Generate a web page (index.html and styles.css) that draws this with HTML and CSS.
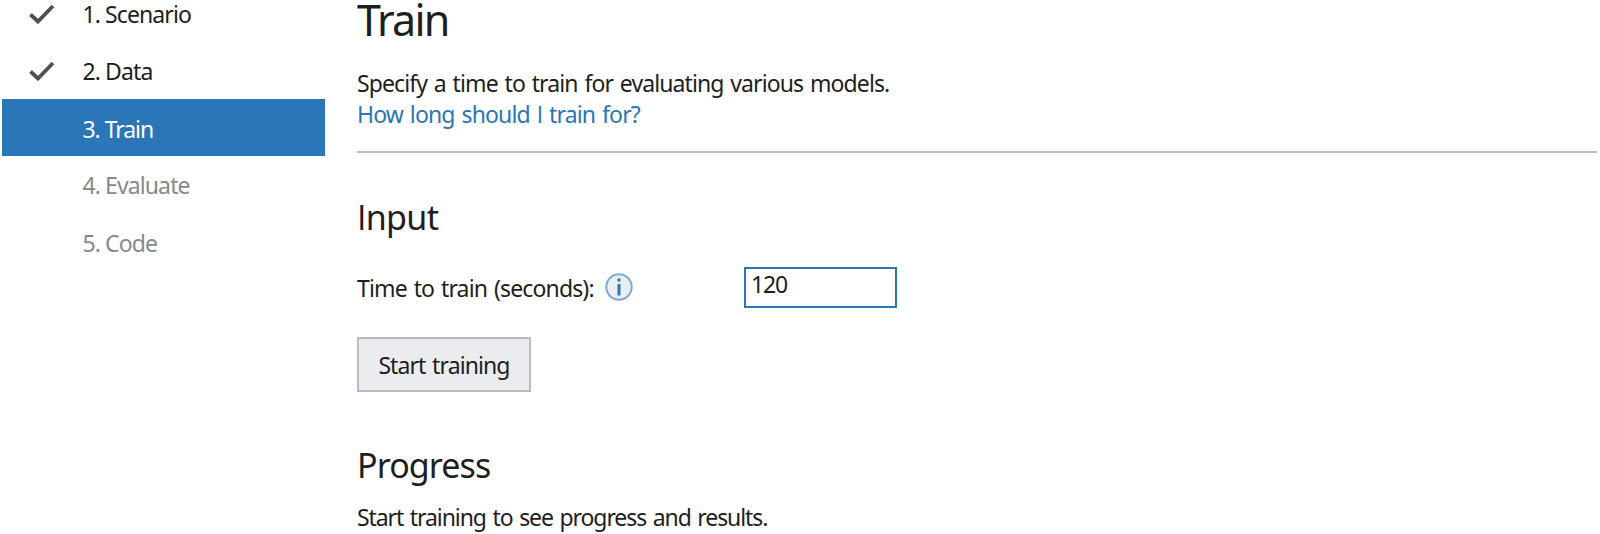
FILE: index.html
```html
<!DOCTYPE html>
<html lang="en">
<head>
<meta charset="utf-8">
<title>Train</title>
<link rel="stylesheet" href="styles.css">
</head>
<body>
<div class="app">
  <nav class="steps">
    <div class="step"><svg class="check" viewBox="0 0 26 20"><path d="M1.5 10.5 L9 17.5 L24 2"/></svg><span>1. Scenario</span></div>
    <div class="step"><svg class="check" viewBox="0 0 26 20"><path d="M1.5 10.5 L9 17.5 L24 2"/></svg><span>2. Data</span></div>
    <div class="step active"><span>3. Train</span></div>
    <div class="step disabled"><span>4. Evaluate</span></div>
    <div class="step disabled"><span>5. Code</span></div>
  </nav>
  <main class="content">
    <h1 class="title">Train</h1>
    <p class="intro">Specify a time to train for evaluating various models.</p>
    <a class="link">How long should <span class="cap-i">I</span> train for?</a>
    <hr class="rule">
    <h2 class="heading"><span class="cap-i">I</span>nput</h2>
    <div class="field">
      <label class="label">Time to train (seconds):</label>
      <svg class="info" viewBox="0 0 28 28"><circle cx="14" cy="14" r="12.7"/><path d="M14 5.5v3M14 11v11.5"/></svg>
      <div class="input">120</div>
    </div>
    <button class="button">Start training</button>
    <h2 class="heading progress">Progress</h2>
    <p class="status">Start training to see progress and results.</p>
  </main>
</div>
</body>
</html>
```
FILE: styles.css
```css
* { box-sizing: border-box; }
body { margin: 0; background: #fff; color: #1e1e1e; font: 23px/30px "Noto Sans", sans-serif; letter-spacing: -0.9px; word-spacing: 1.7px; overflow: hidden; }
.app { display: flex; height: 534px; overflow: hidden; }
.steps { width: 325px; padding-left: 1.5px; letter-spacing: -0.9px; word-spacing: 0; }
.step { height: 57px; display: flex; align-items: center; padding-left: 81px; }
.step:first-child { height: 42px; padding-bottom: 15px; line-height: 26px; }
.check { width: 26px; height: 20px; margin-left: -54px; margin-right: 28px; fill: none; stroke: #505050; stroke-width: 3.8; }
.active { background: #2a76b8; color: #fff; padding-top: 2px; letter-spacing: -1.05px; }
.disabled { color: #85898e; }
.disabled:last-child { padding-top: 2px; }
.content { flex: 1; padding: 0 3px 0 32px; display: flex; flex-direction: column; align-items: flex-start; }
.title { margin: 0; font-size: 43px; line-height: 40px; font-weight: 400; letter-spacing: -1.8px; }
.intro { margin: 28px 0 0; }
.link { color: #2a76b8; margin-top: 1px; letter-spacing: -0.85px; }
.rule { width: 100%; height: 2px; margin: 22px 0 0; border: 0; background: #b9bdc2; }
.heading { margin: 40px 0 0; font-size: 34px; line-height: 48px; font-weight: 400; letter-spacing: -0.7px; }
.cap-i { font-family: "Open Sans"; }
.field { display: flex; align-items: center; height: 41px; margin-top: 26px; }
.label { width: 248px; white-space: nowrap; letter-spacing: -0.85px; }
.info { width: 28px; height: 28px; margin-top: -1px; fill: #eaeef3; stroke: #7fabd0; stroke-width: 2; }
.info path { stroke: #2a76b8; stroke-width: 3; }
.input { width: 153px; height: 41px; margin-left: 111px; border: 2px solid #2a76b8; padding: 0 5px; letter-spacing: -1.2px; }
.button { width: 174px; height: 55px; margin-top: 29px; border: 2px solid #b9bdc2; background: #eaecf0; font: inherit; letter-spacing: -0.9px; word-spacing: 1.5px; color: inherit; padding: 0; }
.progress { margin-top: 49px; letter-spacing: -0.9px; }
.status { margin: 13px 0 0; letter-spacing: -1.08px; }
```
